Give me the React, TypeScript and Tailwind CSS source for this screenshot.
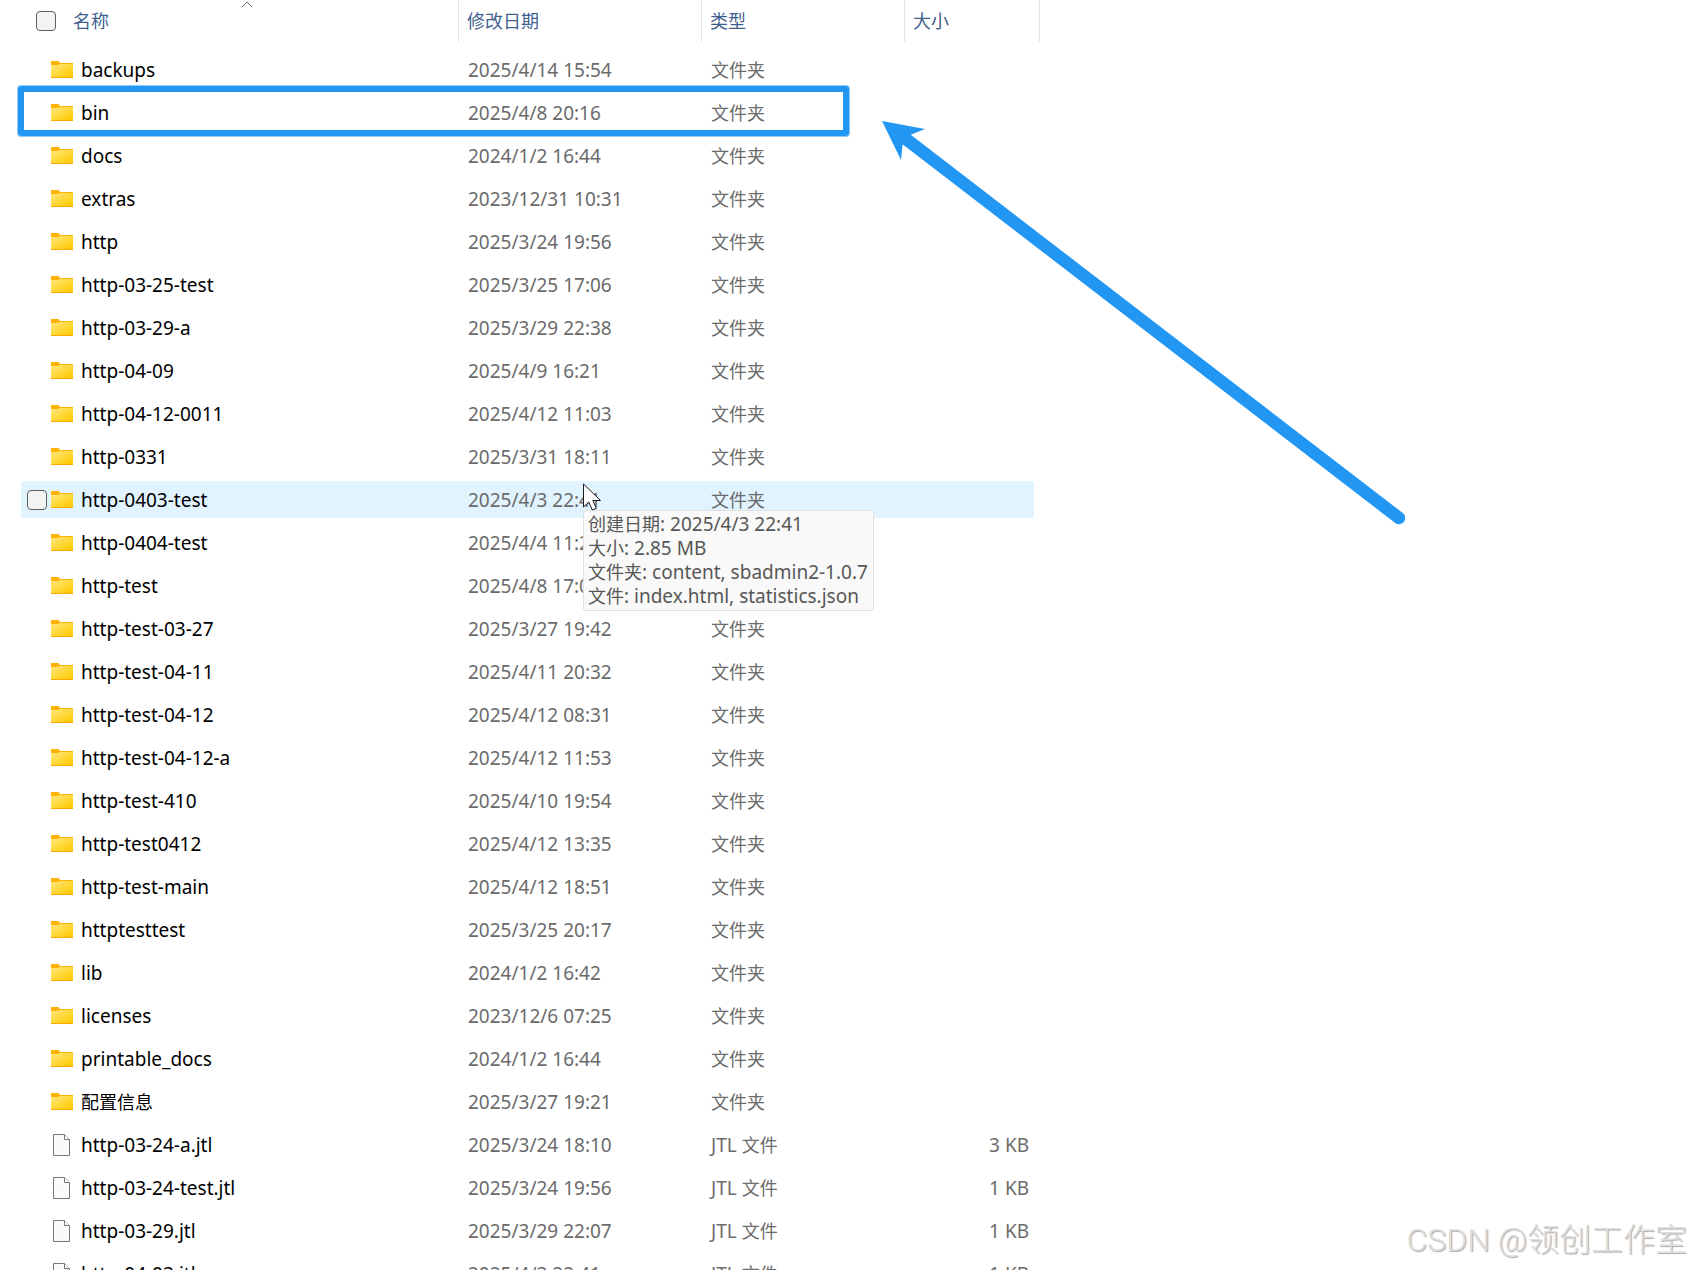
import React from "react";

type Entry = { name: string; date: string; size?: string };

const entries: Entry[] = [
  { name: "backups", date: "2025/4/14 15:54" },
  { name: "bin", date: "2025/4/8 20:16" },
  { name: "docs", date: "2024/1/2 16:44" },
  { name: "extras", date: "2023/12/31 10:31" },
  { name: "http", date: "2025/3/24 19:56" },
  { name: "http-03-25-test", date: "2025/3/25 17:06" },
  { name: "http-03-29-a", date: "2025/3/29 22:38" },
  { name: "http-04-09", date: "2025/4/9 16:21" },
  { name: "http-04-12-0011", date: "2025/4/12 11:03" },
  { name: "http-0331", date: "2025/3/31 18:11" },
  { name: "http-0403-test", date: "2025/4/3 22:41" },
  { name: "http-0404-test", date: "2025/4/4 11:21" },
  { name: "http-test", date: "2025/4/8 17:01" },
  { name: "http-test-03-27", date: "2025/3/27 19:42" },
  { name: "http-test-04-11", date: "2025/4/11 20:32" },
  { name: "http-test-04-12", date: "2025/4/12 08:31" },
  { name: "http-test-04-12-a", date: "2025/4/12 11:53" },
  { name: "http-test-410", date: "2025/4/10 19:54" },
  { name: "http-test0412", date: "2025/4/12 13:35" },
  { name: "http-test-main", date: "2025/4/12 18:51" },
  { name: "httptesttest", date: "2025/3/25 20:17" },
  { name: "lib", date: "2024/1/2 16:42" },
  { name: "licenses", date: "2023/12/6 07:25" },
  { name: "printable_docs", date: "2024/1/2 16:44" },
  { name: "配置信息", date: "2025/3/27 19:21" },
  { name: "http-03-24-a.jtl", date: "2025/3/24 18:10", size: "3 KB" },
  { name: "http-03-24-test.jtl", date: "2025/3/24 19:56", size: "1 KB" },
  { name: "http-03-29.jtl", date: "2025/3/29 22:07", size: "1 KB" },
  { name: "http-04-03.jtl", date: "2025/4/3 22:41", size: "1 KB" },
];

const HOVERED = "http-0403-test";

function Han({ children }: { children: React.ReactNode }) {
  return (
    <span>
      <span className="font-['Noto_Sans_CJK_SC',sans-serif] text-[18px] font-normal">{children}</span>
    </span>
  );
}

function FolderIcon() {
  return (
    <svg width="22" height="20" viewBox="0 0 22 20" className="block" aria-hidden="true">
      <defs>
        <linearGradient id="folder" x1="0" y1="0" x2="1" y2="1">
          <stop offset="0" stopColor="#ffe680" />
          <stop offset="0.5" stopColor="#ffd93b" />
          <stop offset="1" stopColor="#ffc800" />
        </linearGradient>
      </defs>
      <path d="M0 1h7.500l1.500 2H22v3H0z" fill="#ffb300" />
      <path d="M0 5h7l1.500-1H22v13H0z" fill="url(#folder)" />
      <path d="M0 17h22v1H0z" fill="#ffa800" />
    </svg>
  );
}

function FileIcon() {
  return (
    <svg width="22" height="22" viewBox="0 0 22 22" className="block" aria-hidden="true">
      <path d="M2.500.5h11l5 5v16h-16z" fill="#fafafa" stroke="#7a7772" />
      <path d="M13.500.5v5h5" fill="#fff" stroke="#7a7772" />
    </svg>
  );
}

const box =
  "block size-5 appearance-none rounded-[4px] border border-[#5f5f5f] bg-[#f3f3f3] checked:bg-[#2196f3]";

function Row({ entry }: { entry: Entry }) {
  const hovered = entry.name === HOVERED;
  const isFile = entry.size !== undefined;
  const cell = hovered
    ? "flex h-[37px] items-center bg-[#e0f3ff]"
    : "flex h-[37px] items-center";
  return (
    <tr className="text-[#6b6b6b]">
      <td className="py-[3px] pl-[21px]">
        <div className={`${cell} rounded-l-[3px] pl-[6px] text-black`}>
          <div className="w-6">
            {hovered && <input type="checkbox" aria-label={entry.name} className={box} />}
          </div>
          {isFile ? <FileIcon /> : <FolderIcon />}
          <span className="pl-2">
            {/^[a-z]/.test(entry.name) ? entry.name : <Han>{entry.name}</Han>}
          </span>
        </div>
      </td>
      <td className="py-[3px]">
        <div className={`${cell} pl-[9px]`}>{entry.date}</div>
      </td>
      <td className="py-[3px]">
        <div className={`${cell} pl-[9px]`}>
          {isFile ? <span>JTL <Han>文件</Han></span> : <Han>文件夹</Han>}
        </div>
      </td>
      <td className="py-[3px] pr-[6px]">
        <div className={`${cell} justify-end rounded-r-[3px] pr-[5px]`}>{entry.size}</div>
      </td>
    </tr>
  );
}

function HeaderCell({ label }: { label: string }) {
  return (
    <th scope="col" className="pb-[6px] font-normal">
      <div className="flex h-[42px] items-center border-r border-[#e5e5e5] pl-2">
        <button type="button" className="pb-0.5"><Han>{label}</Han></button>
      </div>
    </th>
  );
}

export default function App() {
  return (
    <main className="relative h-screen overflow-hidden bg-white font-['Noto_Sans','Noto_Sans_CJK_SC',sans-serif] text-[19px] leading-6">
      <table className="w-[1040px] table-fixed border-collapse text-left whitespace-nowrap">
        <colgroup>
          <col className="w-[459px]" />
          <col className="w-[243px]" />
          <col className="w-[203px]" />
          <col />
        </colgroup>
        <thead className="text-[#3f5f8f]">
          <tr>
            <th scope="col" aria-sort="ascending" className="relative pb-[6px] font-normal">
              <div className="flex h-[42px] items-center gap-[17px] border-r border-[#e5e5e5] pl-9">
                <input type="checkbox" aria-label="全选" className={box} />
                <button type="button" className="pb-0.5"><Han>名称</Han></button>
              </div>
              <svg width="12" height="7" viewBox="0 0 12 7" className="absolute top-px left-[241px]" aria-hidden="true">
                <path d="M1 6l5-5 5 5" fill="none" stroke="#6b6b6b" />
              </svg>
            </th>
            <HeaderCell label="修改日期" />
            <HeaderCell label="类型" />
            <HeaderCell label="大小" />
          </tr>
        </thead>
        <tbody>
          {entries.map((entry) => (
            <Row key={entry.name} entry={entry} />
          ))}
        </tbody>
      </table>

      <div className="absolute top-[86px] left-[18px] h-[50px] w-[831px] rounded-[3px] border-[6px] border-[#2196f3] ring-1 ring-[#2196f3]/50" />

      <svg width="523" height="405" viewBox="0 0 523 405" className="absolute top-[121px] left-[882px]" aria-hidden="true">
        <path d="M24 18L517 397" stroke="#2196f3" strokeWidth="12.500" strokeLinecap="round" />
        <path d="M0 0L43 8 28 14 20.500 24 19 39z" fill="#2196f3" />
      </svg>

      <div role="tooltip" className="absolute top-[510px] left-[583px] rounded-[3px] border border-[#e0e0e0] bg-[#f9f9f9] pr-[5px] pb-[3px] pl-1 whitespace-nowrap text-[#575757]">
        <p className="h-6"><Han>创建日期</Han>: 2025/4/3 22:41</p>
        <p className="h-6"><Han>大小</Han>: 2.85 MB</p>
        <p className="h-6"><Han>文件夹</Han>: content, sbadmin2-1.0.7</p>
        <p className="h-6"><Han>文件</Han>: index.html, statistics.json</p>
      </div>

      <svg width="19" height="28" viewBox="0 0 19 28" className="absolute top-[483px] left-[583px]" aria-hidden="true">
        <path d="M.5 1v23l5.300-5 3.500 8 4-1.700-3.500-7.800H17.500z" fill="#fff" stroke="#1a1a1a" />
      </svg>

      <p className="absolute right-[5px] bottom-[10px] font-['Roboto','Noto_Sans_CJK_SC',sans-serif] text-[32px] leading-10 font-light whitespace-nowrap text-[#dedede] [text-shadow:1px_1px_1px_#a8a8a8]">
        CSDN @领创工作室
      </p>
    </main>
  );
}
